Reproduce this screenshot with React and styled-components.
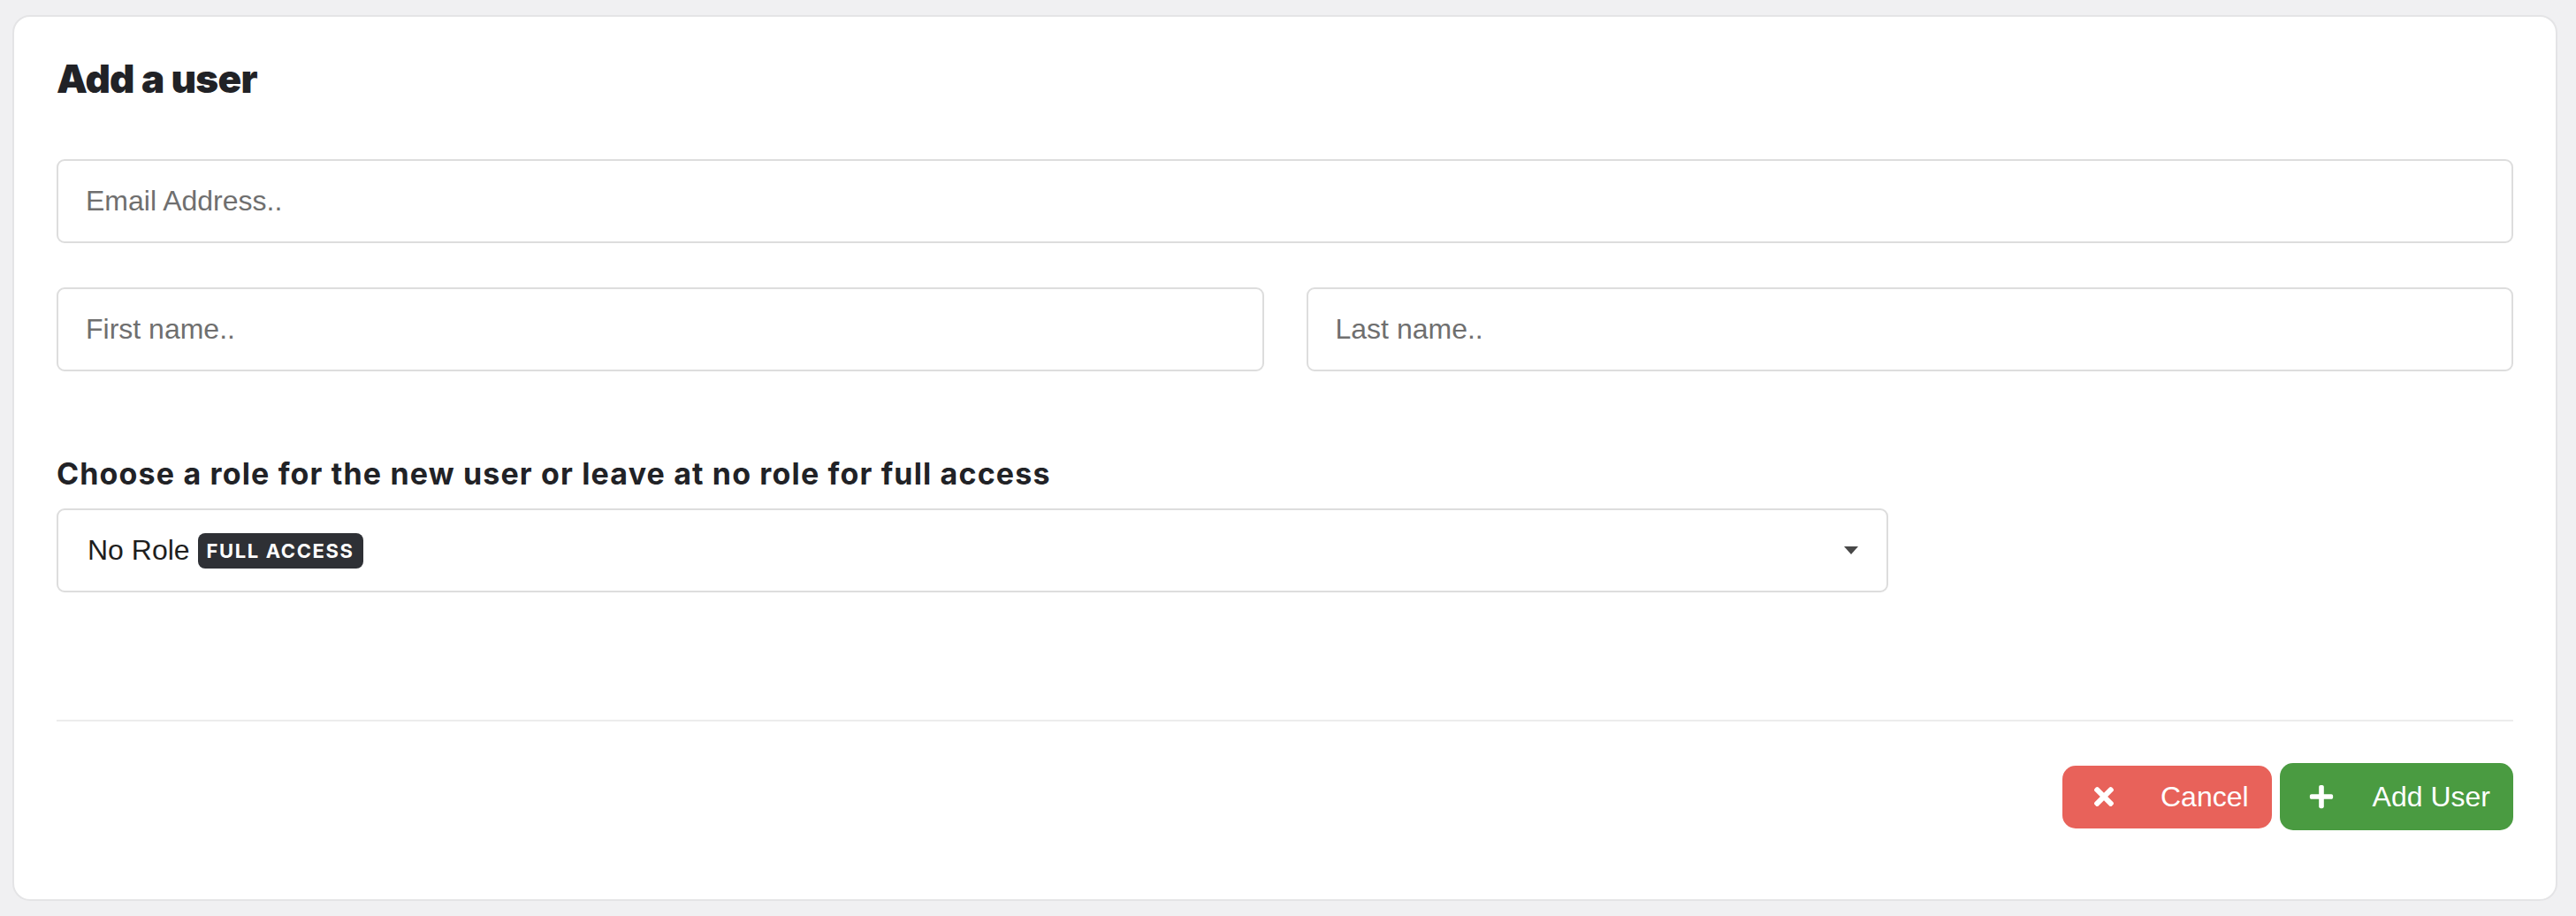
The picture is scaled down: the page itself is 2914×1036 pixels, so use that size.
import React from "react";
import styled, { createGlobalStyle } from "styled-components";
import { FaTimes, FaPlus } from "react-icons/fa";

const Global = createGlobalStyle`
  html, body { margin: 0; padding: 0; }
  body {
    background: #f0f0f2;
    font-family: "Liberation Sans", Arial, sans-serif;
  }
  * { box-sizing: border-box; }
`;

const Page = styled.div`
  padding: 17px 21px 14px 14px;
`;

const Card = styled.section`
  background: #ffffff;
  border: 2px solid #e4e4e6;
  border-radius: 20px;
  padding: 48px 48px 78px 48px;
`;

const Title = styled.h1`
  margin: 0 0 69px 0;
  font-family: "Inter", "Open Sans", sans-serif;
  font-weight: 900;
  font-size: 44px;
  line-height: 1;
  letter-spacing: -0.7px;
  color: #212226;
`;

const TextInput = styled.input`
  display: block;
  width: 100%;
  height: 95px;
  border: 2px solid #dddddd;
  border-radius: 9px;
  padding: 0 31px;
  font-family: "Liberation Sans", Arial, sans-serif;
  font-size: 32px;
  color: #222;
  background: #fff;
  outline: none;
  &::placeholder { color: #6f6f6f; }
`;

const Row = styled.div`
  display: grid;
  grid-template-columns: 1fr 1fr;
  gap: 48px;
  margin-top: 50px;
`;

const Label = styled.div`
  margin-top: 99px;
  font-family: "Inter", "Open Sans", sans-serif;
  font-weight: 700;
  font-size: 34px;
  line-height: 1;
  letter-spacing: 1.15px;
  color: #212226;
`;

const SelectBox = styled.div`
  margin-top: 22px;
  width: calc(75% - 12px);
  height: 95px;
  border: 2px solid #dddddd;
  border-radius: 9px;
  padding: 0 32px 0 33px;
  display: flex;
  align-items: center;
  justify-content: space-between;
  background: #fff;
`;

const SelectValue = styled.div`
  display: flex;
  align-items: center;
  gap: 9px;
  font-family: "Liberation Sans", Arial, sans-serif;
  font-size: 32px;
  color: #1e1e1e;
`;

const Badge = styled.span`
  display: inline-flex;
  align-items: center;
  height: 40px;
  padding: 0 10px;
  border-radius: 8px;
  background: #2e3035;
  color: #ffffff;
  font-family: "Inter", "Open Sans", sans-serif;
  font-weight: 700;
  font-size: 22px;
  letter-spacing: 1.6px;
  text-transform: uppercase;
`;

const Caret = styled.span`
  width: 0;
  height: 0;
  border-left: 8px solid transparent;
  border-right: 8px solid transparent;
  border-top: 9px solid #484848;
`;

const Divider = styled.hr`
  margin: 144px 0 0 0;
  border: none;
  height: 2px;
  background: #ececec;
`;

const Footer = styled.div`
  margin-top: 47px;
  display: flex;
  justify-content: flex-end;
  align-items: center;
  gap: 9px;
`;

const Button = styled.button`
  display: flex;
  align-items: center;
  height: ${(p) => p.$height}px;
  padding: 0 26px 0 24px;
  border: none;
  border-radius: 15px;
  background: ${(p) => p.$bg};
  color: #ffffff;
  font-family: "Liberation Sans", Arial, sans-serif;
  font-size: 32px;
  cursor: pointer;
`;

const IconBox = styled.span`
  width: 46px;
  display: inline-flex;
  justify-content: center;
  align-items: center;
  font-size: ${(p) => p.$size}px;
`;

const ButtonText = styled.span`
  margin-left: ${(p) => p.$gap}px;
`;

export default function App() {
  return (
    <>
      <Global />
      <Page>
        <Card>
          <Title>Add a user</Title>
          <TextInput placeholder="Email Address.." />
          <Row>
            <TextInput placeholder="First name.." />
            <TextInput placeholder="Last name.." />
          </Row>
          <Label>Choose a role for the new user or leave at no role for full access</Label>
          <SelectBox role="combobox">
            <SelectValue>
              No Role <Badge>Full Access</Badge>
            </SelectValue>
            <Caret />
          </SelectBox>
          <Divider />
          <Footer>
            <Button $bg="#e8625a" $height={71}>
              <IconBox $size={32}><FaTimes /></IconBox>
              <ButtonText $gap={41}>Cancel</ButtonText>
            </Button>
            <Button $bg="#4a9b41" $height={76}>
              <IconBox $size={30}><FaPlus /></IconBox>
              <ButtonText $gap={35}>Add User</ButtonText>
            </Button>
          </Footer>
        </Card>
      </Page>
    </>
  );
}
